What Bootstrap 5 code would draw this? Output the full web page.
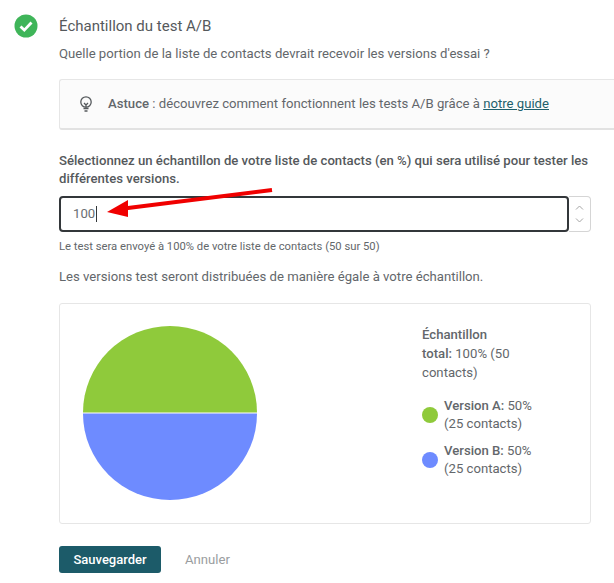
<!DOCTYPE html>
<html lang="fr">
<head>
  <meta charset="UTF-8">
  <meta name="viewport" content="width=device-width, initial-scale=1.0">
  <title>Échantillon du test A/B</title>
  <link href="https://cdn.jsdelivr.net/npm/bootstrap@5.3.3/dist/css/bootstrap.min.css" rel="stylesheet">
  <script src="https://cdn.jsdelivr.net/npm/bootstrap@5.3.3/dist/js/bootstrap.bundle.min.js"></script>
  <style>
    html, body { height: 583px; overflow: hidden; }
    body { font-family: Roboto, "Liberation Sans", sans-serif; font-size: 13.15px; color: #63676b; background: #fff; }
    .page-wrap { position: relative; padding: 17px 23px 0 14px; width: 614px; }
    .check-icon { margin: -3px 21px 0 0; flex: none; }
    .step-title { font-size: 15px; font-weight: 400; line-height: 19px; color: #55595c; margin: 0; }
    .step-sub { line-height: 18px; margin: 9px 0 0; }
    .tip-box { height: 51px; margin: 16px -23px 0 0; background: #fbfbfb; border: 1px solid #e6e6e6; border-right: 0; border-bottom: 2px solid #e2e2e2; border-radius: 3px 0 0 3px; padding-left: 18px; gap: 14px; }
    .tip-box b, .field-label, .legend-text b, .legend-col p b { font-weight: 500; }
    .tip-box a { color: #1f5f6c; }
    .field-label { display: block; line-height: 18px; margin: 22px 0 0; color: #55595c; }
    .num-wrap { margin-top: 8px; }
    .num-input { width: 510px; height: 36px; border: 2px solid #33373a; border-radius: 4px; padding-left: 12px; line-height: 1; color: #6a6e72; }
    .caret-bar { width: 1px; height: 16px; background: #33373a; margin-left: 1px; }
    .spin-box { width: 22px; height: 36px; border: 1px solid #d5d5d5; border-left: 0; border-radius: 0 4px 4px 0; }
    .spin-box svg { display: block; }
    .hint-text { font-size: 11.25px; line-height: 14px; margin: 8px 0 0; }
    .split-text { line-height: 18px; margin: 14px 0 0; }
    .chart-box { height: 221px; margin-top: 17px; border: 1px solid #e6e6e6; border-radius: 3px; padding: 0 20px 1px 23px; }
    .legend-col { width: 126px; margin-left: 165px; padding-bottom: 14px; line-height: 19px; }
    .legend-col p { width: 95px; margin: 0 0 15px; }
    .legend-row { gap: 6px; margin-bottom: 9px; }
    .legend-text { line-height: 18px; }
    .legend-dot { width: 16px; height: 16px; border-radius: 50%; flex: none; }
    .dot-a { background: #8fca3b; }
    .dot-b { background: #6e8bff; }
    .action-row { margin-top: 22px; gap: 24px; }
    .btn-save { height: 27px; width: 102px; padding: 0; font-size: 13px; font-weight: 500; line-height: 27px; color: #fff; background: #1c5b69; border: 0; border-radius: 3px; }
    .btn-save:hover { color: #fff; background: #1c5b69; }
    .btn-cancel { color: #9a9da0; }
    .red-arrow { position: absolute; left: 100px; top: 183px; }
  </style>
</head>
<body>
<div class="page-wrap">
  <div class="d-flex">
    <svg width="24" height="24" viewBox="0 0 24 24" class="check-icon">
      <circle cx="12" cy="12" r="11.5" fill="#3fb559"/>
      <path d="M6.500 12.500l3.800 3.600 7.200-7.600" fill="none" stroke="#fff" stroke-width="2.800"/>
    </svg>
    <div class="flex-grow-1">
      <h1 class="step-title">Échantillon du test A/B</h1>
      <p class="step-sub">Quelle portion de la liste de contacts devrait recevoir les versions d'essai ?</p>
      <div class="tip-box d-flex align-items-center">
        <svg width="16" height="18" viewBox="0 0 16 18" fill="none" stroke="#55595c" stroke-width="1.3">
          <circle cx="8" cy="7" r="5.2"/>
          <path d="M6 8l2 2 2-2M8 10v2.500M5.500 13.500h5M6.500 16h3"/>
        </svg>
        <span><b>Astuce</b> : découvrez comment fonctionnent les tests A/B grâce à <a href="#">notre guide</a></span>
      </div>
      <label class="field-label" for="sample">Sélectionnez un échantillon de votre liste de contacts (en %) qui sera utilisé pour tester les différentes versions.</label>
      <div class="num-wrap d-flex">
        <div class="num-input d-flex align-items-center" id="sample">100<span class="caret-bar"></span></div>
        <div class="spin-box d-flex flex-column align-items-center justify-content-around py-1">
          <svg width="9" height="5" viewBox="0 0 9 5"><path d="M1 4.500l3.500-3.500 3.500 3.500" fill="none" stroke="#a5a5a5"/></svg>
          <svg width="9" height="5" viewBox="0 0 9 5"><path d="M1 .5l3.500 3.500 3.500-3.500" fill="none" stroke="#a5a5a5"/></svg>
        </div>
      </div>
      <p class="hint-text">Le test sera envoyé à 100% de votre liste de contacts (50 sur 50)</p>
      <p class="split-text">Les versions test seront distribuées de manière égale à votre échantillon.</p>
      <div class="chart-box d-flex align-items-center">
        <svg width="174" height="174" viewBox="0 0 174 174" class="flex-shrink-0">
          <path d="M0 86.500a87 86.500 0 0 1 174 0z" fill="#8fca3b"/>
          <path d="M0 87.500a87 86.500 0 0 0 174 0z" fill="#6e8bff"/>
        </svg>
        <div class="legend-col flex-shrink-0">
          <p><b>Échantillon</b><br><b>total:</b> 100% (50<br>contacts)</p>
          <div class="legend-row d-flex align-items-center">
            <span class="legend-dot dot-a"></span>
            <span class="legend-text"><b>Version A:</b> 50%<br>(25 contacts)</span>
          </div>
          <div class="legend-row d-flex align-items-center">
            <span class="legend-dot dot-b"></span>
            <span class="legend-text"><b>Version B:</b> 50%<br>(25 contacts)</span>
          </div>
        </div>
      </div>
      <div class="action-row d-flex align-items-center">
        <button type="button" class="btn btn-save">Sauvegarder</button>
        <a href="#" class="btn-cancel text-decoration-none">Annuler</a>
      </div>
    </div>
  </div>
  <svg class="red-arrow" width="180" height="40" viewBox="0 0 180 40">
    <path d="M172 7L20 26" stroke="#f00000" stroke-width="4" fill="none"/>
    <path d="M7 29l21-12 0 17z" fill="#f00000"/>
  </svg>
</div>
</body>
</html>
